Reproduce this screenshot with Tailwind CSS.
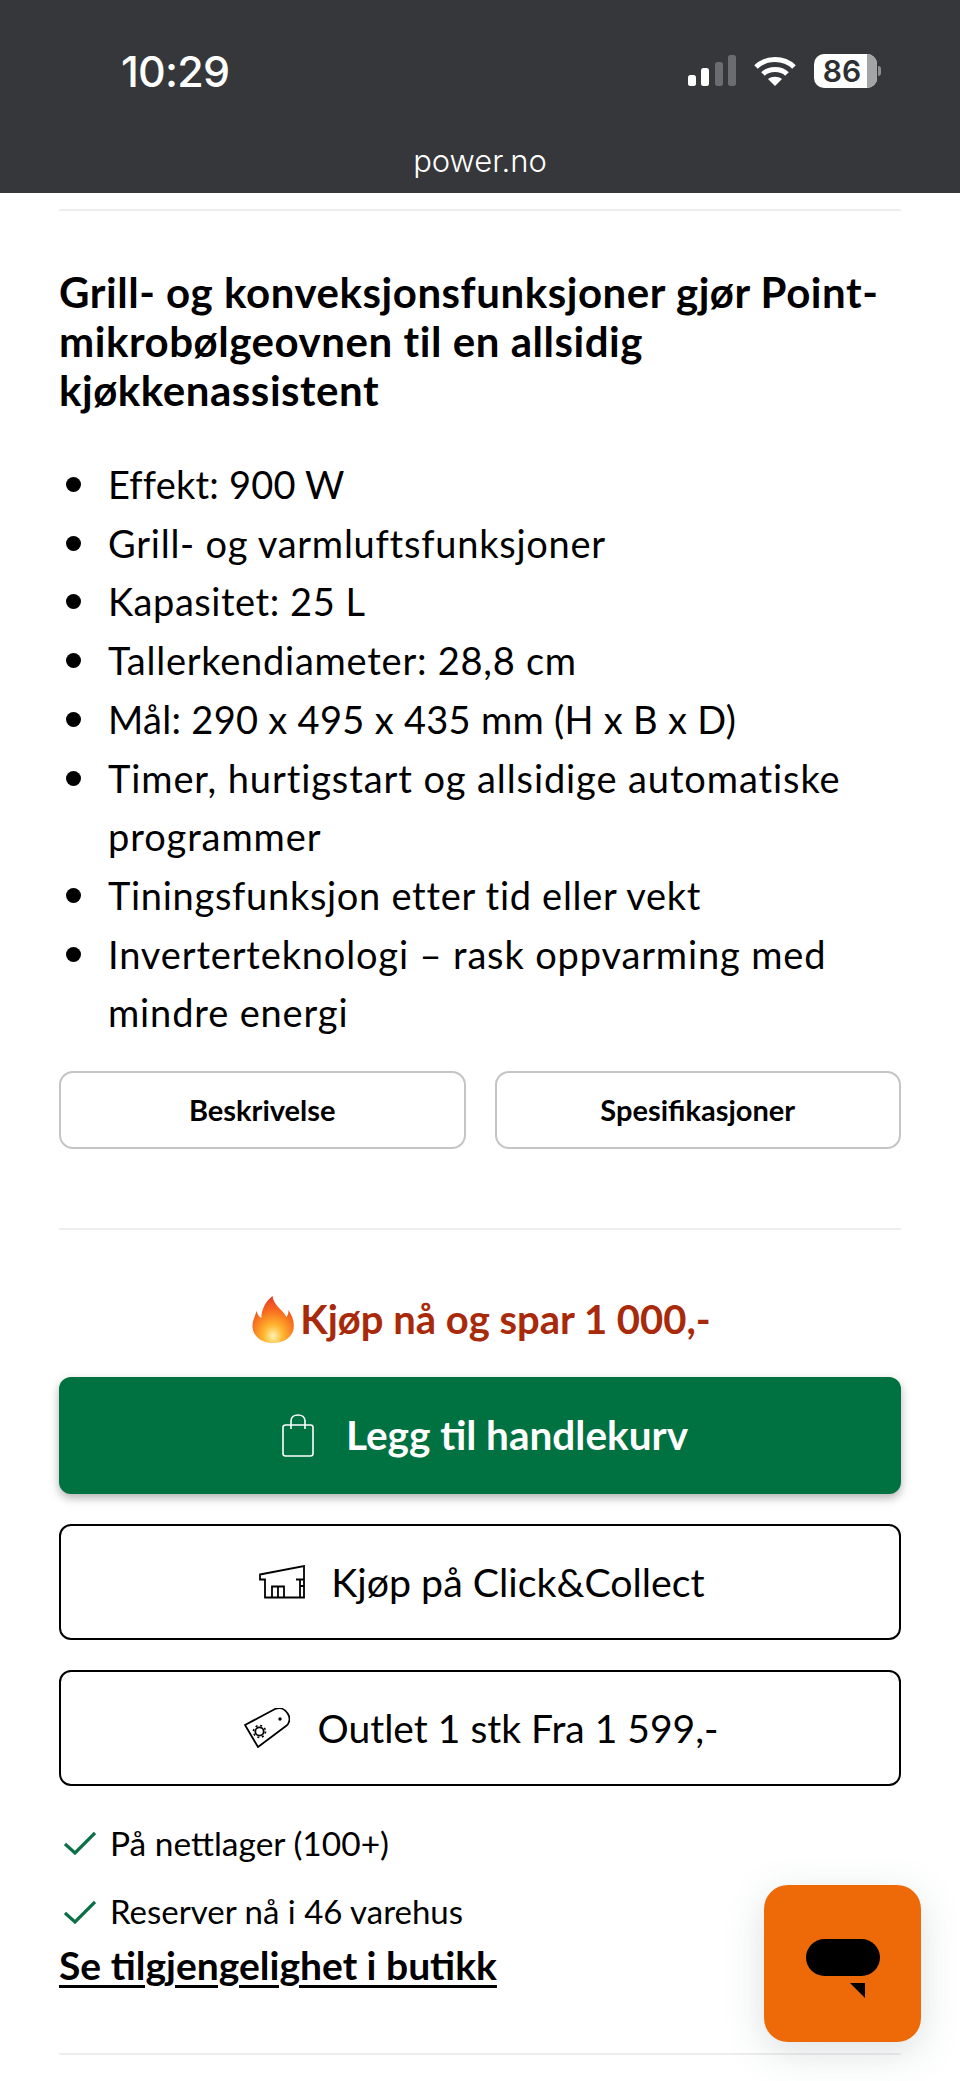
<!DOCTYPE html>
<html lang="en">
<head>
  <meta charset="UTF-8" />
  <meta name="viewport" content="width=device-width, initial-scale=1.0" />
  <title>Power.no</title>
  <script src="https://cdn.jsdelivr.net/npm/@tailwindcss/browser@4"></script>
</head>
<body class="bg-white font-['Lato',sans-serif] text-black">
<div class="relative h-[2081px] w-[960px] overflow-hidden">

  <!-- Status bar -->
  <header class="h-[193px] bg-[#35373a] text-white">
    <div class="flex items-center justify-between h-[142px] pl-[121px] pr-[79px]">
      <span class="font-['Inter',sans-serif] text-[43px] font-medium leading-none tracking-[-0.8px]">10:29</span>
      <div class="flex items-center gap-[18px]">
        <svg width="48" height="32" viewBox="0 0 48 32">
          <rect x="0" y="20" width="8" height="11" rx="2.5" fill="#fff"/>
          <rect x="13" y="13" width="8" height="18" rx="2.5" fill="#fff"/>
          <rect x="27" y="7" width="8" height="24" rx="2.5" fill="#6a6c6f"/>
          <rect x="40" y="0" width="8" height="31" rx="2.5" fill="#6a6c6f"/>
        </svg>
        <svg width="42" height="31" viewBox="0 0 42 31" fill="none" stroke="#fff" stroke-width="5">
          <path d="M2 11 C12 1 30 1 40 11"/>
          <path d="M9 18 C15 12 27 12 33 18"/>
          <path d="M21 30 L14 23 C18 20 24 20 28 23 Z" fill="#fff" stroke="none"/>
        </svg>
        <div class="relative flex items-center">
          <div class="relative w-[63px] h-[34px] rounded-[10px] overflow-hidden bg-white flex items-center justify-center pr-[7px] font-['Inter',sans-serif] text-[30px] font-semibold text-[#2d2f32]">
            86
            <span class="absolute right-0 top-0 h-full w-[10px] bg-[#a3a4a6]"></span>
          </div>
          <span class="ml-[1px] w-[3px] h-[10px] rounded-r-full bg-[#8d8e90]"></span>
        </div>
      </div>
    </div>
    <p class="mt-[3px] text-center text-[31px] leading-none font-['Inter',sans-serif] font-light">power.no</p>
  </header>

  <main class="px-[59px]">
    <div class="h-[2px] bg-[#eeeeee] mt-[16px]"></div>

    <h2 class="mt-[57px] text-[42px] leading-[49px] font-bold tracking-[0.55px]">Grill- og konveksjonsfunksjoner gjør Point-<br>mikrobølgeovnen til en allsidig<br>kjøkkenassistent</h2>

    <!-- Bullets are drawn by hand: the marker is bigger and further left than list-disc gives -->
    <ul class="mt-[40px] pl-[49px] text-[38px] leading-[58.7px]">
      <li class="relative tracking-[0.2px]"><span class="absolute -left-[42px] top-[22px] size-[15px] rounded-full bg-black"></span>Effekt: 900 W</li>
      <li class="relative tracking-[0.75px]"><span class="absolute -left-[42px] top-[22px] size-[15px] rounded-full bg-black"></span>Grill- og varmluftsfunksjoner</li>
      <li class="relative tracking-[0.55px]"><span class="absolute -left-[42px] top-[22px] size-[15px] rounded-full bg-black"></span>Kapasitet: 25 L</li>
      <li class="relative tracking-[0.75px]"><span class="absolute -left-[42px] top-[22px] size-[15px] rounded-full bg-black"></span>Tallerkendiameter: 28,8 cm</li>
      <li class="relative tracking-[0.3px]"><span class="absolute -left-[42px] top-[22px] size-[15px] rounded-full bg-black"></span>Mål: 290 x 495 x 435 mm (H x B x D)</li>
      <li class="relative tracking-[0.9px]"><span class="absolute -left-[42px] top-[22px] size-[15px] rounded-full bg-black"></span>Timer, hurtigstart og allsidige automatiske programmer</li>
      <li class="relative tracking-[0.7px]"><span class="absolute -left-[42px] top-[22px] size-[15px] rounded-full bg-black"></span>Tiningsfunksjon etter tid eller vekt</li>
      <li class="relative tracking-[0.85px]"><span class="absolute -left-[42px] top-[22px] size-[15px] rounded-full bg-black"></span>Inverterteknologi – rask oppvarming med mindre energi</li>
    </ul>

    <div class="mt-[29px] grid grid-cols-2 gap-[29px]">
      <button class="h-[78px] rounded-[14px] border-2 border-[#c4c4c4] text-[29px] font-bold">Beskrivelse</button>
      <button class="h-[78px] rounded-[14px] border-2 border-[#c4c4c4] text-[29px] font-bold">Spesifikasjoner</button>
    </div>

    <div class="h-[2px] bg-[#eeeeee] mt-[79px]"></div>

    <p class="mt-[63px] flex items-center justify-center h-[52px] pl-[3px] text-[40px] font-bold text-[#a82a0b]">
      <svg width="43" height="48" viewBox="0 0 46 48" preserveAspectRatio="none" class="mr-[5px]">
        <defs>
          <radialGradient id="flame" cx="50%" cy="85%" r="80%">
            <stop offset="0" stop-color="#fff3b0"/>
            <stop offset="0.3" stop-color="#ffb52e"/>
            <stop offset="0.7" stop-color="#f7691e"/>
            <stop offset="1" stop-color="#e8402a"/>
          </radialGradient>
        </defs>
        <path d="M22 1 C23 10 32 14 37 22 C39 19 39 17 39 15 C44 22 46 29 44 36 C41 44 32 48 23 48 C13 48 4 44 1 35 C-1 28 3 22 5 16 C6 20 8 22 10 23 C10 14 15 6 22 1 Z" fill="url(#flame)"/>
      </svg>
      <span>Kjøp nå og spar 1 000,-</span>
    </p>

    <button class="mt-[32px] flex items-center justify-center gap-[32px] w-full h-[117px] pl-[10px] rounded-[12px] bg-[#007140] text-white text-[40.5px] font-bold shadow-[0_4px_10px_rgba(0,0,0,0.3)]">
      <svg width="32" height="43" viewBox="0 0 32 43" fill="none" stroke="#fff" stroke-width="1.6">
        <rect x="1" y="11" width="30" height="31" rx="2.5"/>
        <path d="M9 15 V7 C9 -1 23 -1 23 7 V15"/>
      </svg>
      <span>Legg til handlekurv</span>
    </button>

    <button class="mt-[30px] flex items-center justify-center gap-[25px] w-full h-[116px] pl-[4px] rounded-[12px] border-2 border-black text-[39.3px]">
      <svg width="47" height="34" viewBox="0 0 47 34" fill="none" stroke="#000" stroke-width="1.8">
        <path d="M1 9.5 L45 1 V32.5 H6 V14.5 H1 Z"/>
        <path d="M13 32.5 V21.5 H25 V32.5 M19 21.5 V32.5 M37 14.5 H45 M41 14.5 V32.5 M41 21 H45"/>
      </svg>
      <span>Kjøp på Click&amp;Collect</span>
    </button>

    <button class="mt-[30px] flex items-center justify-center gap-[28px] w-full h-[116px] pl-[2px] rounded-[12px] border-2 border-black text-[39px]">
      <svg width="46" height="40" viewBox="0 0 46 40" fill="none" stroke="#000" stroke-width="1.8">
        <path d="M1 17 L31 1 C36 -1 41 1 44 6 C47 11 45 16 42 18 L14 39 Z"/>
        <circle cx="36" cy="11" r="1.7" fill="#000" stroke="none"/>
        <circle cx="15.5" cy="23.5" r="4.2"/>
        <circle cx="15.5" cy="23.5" r="6" stroke-width="1.6" stroke-dasharray="2 2.7"/>
      </svg>
      <span>Outlet 1 stk Fra 1 599,-</span>
    </button>

    <div class="mt-[35px] flex items-center gap-[14px] h-[44px] pl-[5px] text-[33.5px]">
      <svg width="32" height="24" viewBox="0 0 32 24" fill="none" stroke="#0b7048" stroke-width="3.2"><path d="M1 13 L11 22 L31 2"/></svg>
      <span>På nettlager (100+)</span>
    </div>
    <div class="mt-[25px] flex items-center gap-[14px] h-[44px] pl-[5px] text-[33px]">
      <svg width="32" height="24" viewBox="0 0 32 24" fill="none" stroke="#0b7048" stroke-width="3.2"><path d="M1 13 L11 22 L31 2"/></svg>
      <span>Reserver nå i 46 varehus</span>
    </div>
    <a href="#" class="block mt-[6px] text-[39px] leading-[50px] font-bold underline underline-offset-[5px]">Se tilgjengelighet i butikk</a>

    <div class="h-[2px] bg-[#eeeeee] mt-[63px]"></div>
  </main>

  <!-- Chat widget -->
  <div class="absolute left-[764px] top-[1885px] w-[157px] h-[157px] rounded-[24px] bg-[#ee6a08] shadow-[0_10px_40px_rgba(60,90,90,0.18)] flex items-center justify-center">
    <svg width="74" height="60" viewBox="0 0 74 60" class="mt-[10px]">
      <rect x="0" y="0" width="74" height="37" rx="18.5" fill="#000"/>
      <path d="M44 44 H59 V59 Z" fill="#000"/>
    </svg>
  </div>
</div>
</body>
</html>
